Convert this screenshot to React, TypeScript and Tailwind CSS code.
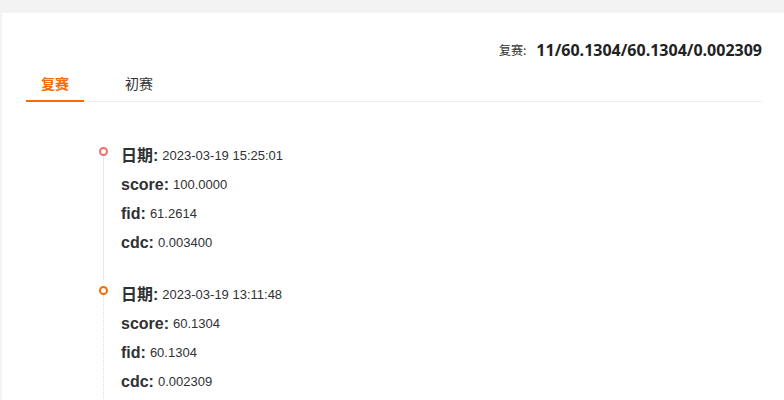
import React from "react";

const items = [
  { date: "2023-03-19 15:25:01", score: "100.0000", fid: "61.2614", cdc: "0.003400", color: "border-[#f56c6c]", last: false },
  { date: "2023-03-19 13:11:48", score: "60.1304", fid: "60.1304", cdc: "0.002309", color: "border-[#ff6a00]", last: true },
];

function Row({ label, value }: { label: string; value: string }) {
  return (
    <div className="h-[29px] flex items-center whitespace-nowrap">
      <span className="text-[16px] font-bold text-[#303133]" style={{ fontFamily: '"Liberation Sans", "Noto Sans CJK SC", sans-serif' }}>
        {label}:
      </span>
      <span className="ml-[4px] text-[13px] text-[#303133]" style={{ fontFamily: '"Liberation Sans", Arial, sans-serif' }}>
        {value}
      </span>
    </div>
  );
}

export default function App() {
  return (
    <div className="w-[784px] h-[400px] overflow-hidden bg-[#f3f3f3] pt-[13px] pl-[2px]" style={{ fontFamily: '"Liberation Sans", "Noto Sans CJK SC", sans-serif' }}>
      <div className="bg-white h-full pl-[24px] pr-[22px]">
        <div className="flex justify-end items-center pt-[27px] h-[47px] whitespace-nowrap">
          <span className="text-[12px] text-[#333]" style={{ fontFamily: '"Noto Sans CJK SC", sans-serif' }}>复赛:</span>
          <span className="ml-[10px] text-[16px] font-bold text-[#222]" style={{ fontFamily: '"Open Sans", "Noto Sans", sans-serif' }}>
            11/60.1304/60.1304/0.002309
          </span>
        </div>
        <div className="mt-[13px] flex border-b border-[#eeeeee] h-[29px]" style={{ fontFamily: '"Noto Sans CJK SC", sans-serif' }}>
          <div className="w-[58px] flex justify-center text-[14px] font-bold text-[#ff6a00] border-b-2 border-[#ff6a00] -mb-px leading-[20px]">
            复赛
          </div>
          <div className="ml-[41px] text-[14px] text-[#333] leading-[20px]">初赛</div>
        </div>
        <div className="mt-[39px] pl-[73px]">
          {items.map((it, i) => (
            <div key={i} className="flex">
              <div className="w-[9px] flex flex-col items-center">
                <div className={`mt-[6px] w-[9px] h-[9px] rounded-full border-2 ${it.color} bg-white`} />
                {it.last ? (
                  <div className="flex-1 border-l border-dotted border-[#dddddd]" />
                ) : (
                  <div className="flex-1 w-px bg-[#e8e8e8]" />
                )}
              </div>
              <div className="ml-[13px] pb-[23px]">
                <Row label="日期" value={it.date} />
                <Row label="score" value={it.score} />
                <Row label="fid" value={it.fid} />
                <Row label="cdc" value={it.cdc} />
              </div>
            </div>
          ))}
        </div>
      </div>
    </div>
  );
}
